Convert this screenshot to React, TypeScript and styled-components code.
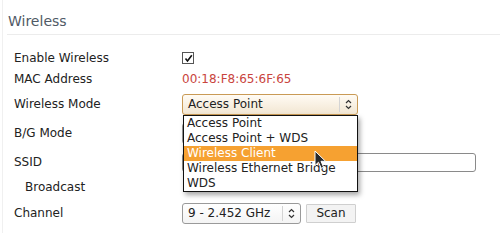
import React from "react";
import styled, { createGlobalStyle } from "styled-components";

const Global = createGlobalStyle`
  html, body { margin: 0; padding: 0; background: #fff; }
  body { font-family: "DejaVu Sans", "Liberation Sans", sans-serif; font-size: 12px; color: #222; }
`;

const Page = styled.div`
  width: 500px;
  height: 233px;
  overflow: hidden;
  position: relative;
`;

const Panel = styled.section`
  margin-left: 2px;
  border-left: 1px solid #f0f0f0;
  padding-left: 4px;
  height: 233px;
  box-sizing: border-box;
`;

const Heading = styled.h2`
  margin: 0;
  padding: 13px 0 4px 1px;
  font-size: 14px;
  line-height: 17px;
  font-weight: normal;
  color: #505a66;
  border-bottom: 1px solid #ececec;
`;

const Form = styled.div`
  padding: 13px 0 0 7px;
`;

const Row = styled.div<{ $h: number }>`
  display: grid;
  grid-template-columns: 168px 1fr;
  align-items: center;
  height: ${(p) => p.$h}px;
`;

const Label = styled.div<{ $indent?: boolean }>`
  padding-left: ${(p) => (p.$indent ? 11 : 0)}px;
  font-size: 12px;
  color: #222;
  white-space: nowrap;
`;

const Value = styled.div`
  display: flex;
  align-items: center;
  gap: 5px;
  position: relative;
`;

const Check = styled.span`
  width: 10px;
  height: 10px;
  border: 1px solid #555;
  background: #fff;
  display: flex;
  align-items: center;
  justify-content: center;
`;

const Mac = styled.span`
  color: #c9443d;
  font-size: 12px;
`;

const SelectBox = styled.div<{ $w: number; $active?: boolean }>`
  position: relative;
  width: ${(p) => p.$w}px;
  height: 21px;
  box-sizing: border-box;
  border: 1px solid ${(p) => (p.$active ? "#c99a55" : "#9a9a9a")};
  border-radius: 3px;
  background: ${(p) =>
    p.$active
      ? "linear-gradient(#fffbf4, #f2e6d2)"
      : "linear-gradient(#ffffff, #f4f4f4)"};
  display: flex;
  align-items: center;
  padding-left: 5px;
  font-size: 12px;
  color: #222;
`;

const SelectText = styled.span`
  flex: 1;
  white-space: nowrap;
`;

const ArrowCell = styled.span`
  width: 17px;
  height: 15px;
  border-left: 1px solid #d4d4d4;
  display: flex;
  align-items: center;
  justify-content: center;
`;

const Menu = styled.ul`
  position: absolute;
  left: 0;
  top: calc(100% + 1px);
  width: 175px;
  margin: 0;
  padding: 0;
  list-style: none;
  background: #fff;
  border: 1px solid #111;
  box-shadow: 2px 3px 5px rgba(0, 0, 0, 0.35);
  z-index: 5;
  box-sizing: border-box;
`;

const MenuItem = styled.li<{ $sel?: boolean }>`
  height: 15px;
  line-height: 15px;
  padding-left: 3px;
  font-size: 12px;
  white-space: nowrap;
  background: ${(p) => (p.$sel ? "#f6a131" : "transparent")};
  color: ${(p) => (p.$sel ? "#fff" : "#222")};
`;

const Cursor = styled.svg`
  position: absolute;
  left: 130px;
  top: 34px;
  z-index: 6;
`;

const TextInput = styled.div`
  width: 294px;
  height: 19px;
  box-sizing: border-box;
  border: 1px solid #8a8a8a;
  border-radius: 3px;
  background: #fff;
`;

const Button = styled.button`
  height: 19px;
  width: 50px;
  padding: 0;
  border: 1px solid #cfcfcf;
  border-radius: 1px;
  background: #f3f3f3;
  font-family: "DejaVu Sans", sans-serif;
  font-size: 12px;
  color: #222;
`;

const Arrows = () => (
  <svg width="7" height="11" viewBox="0 0 7 11">
    <path d="M1 4 L3.5 1.5 L6 4 M1 7 L3.5 9.5 L6 7" fill="none" stroke="#333" strokeWidth="1.2" />
  </svg>
);

const options = [
  "Access Point",
  "Access Point + WDS",
  "Wireless Client",
  "Wireless Ethernet Bridge",
  "WDS",
];

export default function App() {
  return (
    <Page>
      <Global />
      <Panel>
        <Heading>Wireless</Heading>
        <Form>
          <Row $h={20}>
            <Label>Enable Wireless</Label>
            <Value>
              <Check>
                <svg width="9" height="9" viewBox="0 0 9 9">
                  <path d="M1.5 4.5 L3.5 7 L7.8 1.2" fill="none" stroke="#111" strokeWidth="1.6" />
                </svg>
              </Check>
            </Value>
          </Row>
          <Row $h={22}>
            <Label>MAC Address</Label>
            <Value>
              <Mac>00:18:F8:65:6F:65</Mac>
            </Value>
          </Row>
          <Row $h={28}>
            <Label>Wireless Mode</Label>
            <Value>
              <SelectBox $w={176} $active>
                <SelectText>Access Point</SelectText>
                <ArrowCell>
                  <Arrows />
                </ArrowCell>
                <Menu>
                  {options.map((o) => (
                    <MenuItem key={o} $sel={o === "Wireless Client"}>
                      {o}
                    </MenuItem>
                  ))}
                  <Cursor width="13" height="20" viewBox="0 0 13 20">
                    <path
                      d="M1 1 L1 15.5 L4.5 12.2 L7.2 18.3 L9.6 17.2 L7 11.3 L11.6 11.3 Z"
                      fill="#2a2a2a"
                      stroke="#fff"
                      strokeWidth="1"
                      strokeLinejoin="round"
                    />
                  </Cursor>
                </Menu>
              </SelectBox>
            </Value>
          </Row>
          <Row $h={30}>
            <Label>B/G Mode</Label>
            <Value>
              <SelectBox $w={120}>
                <SelectText />
                <ArrowCell>
                  <Arrows />
                </ArrowCell>
              </SelectBox>
            </Value>
          </Row>
          <Row $h={28}>
            <Label>SSID</Label>
            <Value>
              <TextInput />
            </Value>
          </Row>
          <Row $h={22}>
            <Label $indent>Broadcast</Label>
            <Value />
          </Row>
          <Row $h={30}>
            <Label>Channel</Label>
            <Value>
              <SelectBox $w={119}>
                <SelectText>9 - 2.452 GHz</SelectText>
                <ArrowCell>
                  <Arrows />
                </ArrowCell>
              </SelectBox>
              <Button>Scan</Button>
            </Value>
          </Row>
        </Form>
      </Panel>
    </Page>
  );
}
